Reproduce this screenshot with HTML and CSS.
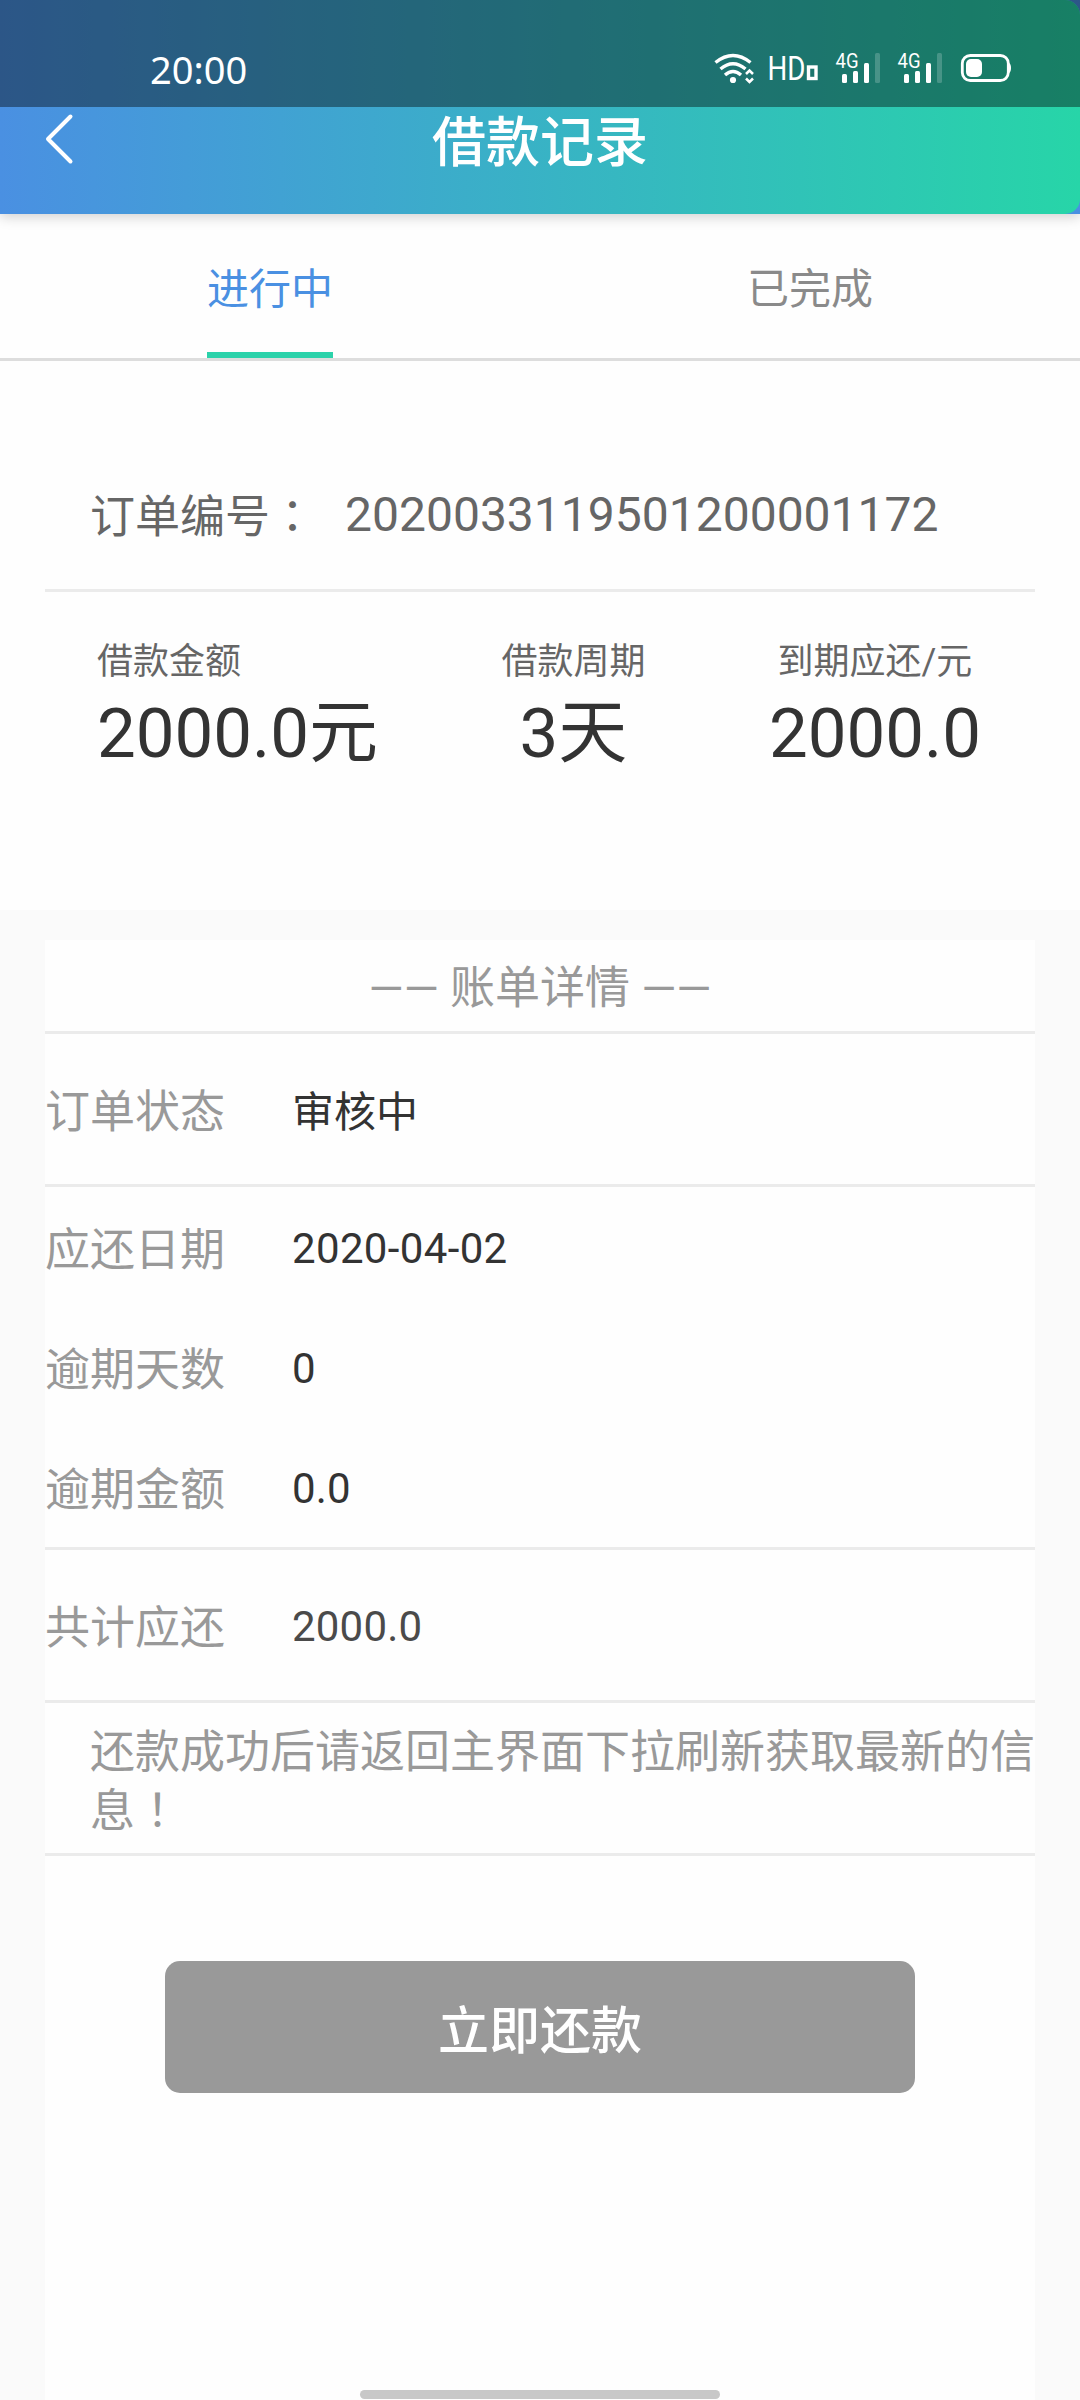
FILE: index.html
```html
<!DOCTYPE html>
<html lang="zh-CN">
<head>
  <meta charset="UTF-8" />
  <meta name="viewport" content="width=device-width, initial-scale=1.0"/>
  <title>借款记录</title>
  <link rel="stylesheet" href="styles.css">
</head>
<body>
  <header class="header">
    <div class="header-bg">
      <div class="status-bar">
        <span class="time">20:00</span>
        <svg class="status-icons" width="300" height="50" viewBox="712 44 300 50">
          <!-- wifi -->
          <g fill="none" stroke="#fff" stroke-width="3.4">
            <path d="M715.500 62.500 Q733 48.500 750.500 62.500"/>
            <path d="M720.500 69 Q733 58.500 745.500 69"/>
            <path d="M725 75 Q733 68 741 75"/>
          </g>
          <circle cx="733" cy="80" r="3.1" fill="#fff"/>
          <path d="M746 74 L749.500 70.500 L753 74 M746 78.500 L749.500 82 L753 78.500" fill="none" stroke="#fff" stroke-width="2.500"/>
          <!-- HD -->
          <text class="hd" x="767.500" y="80" textLength="38" lengthAdjust="spacingAndGlyphs">HD</text>
          <rect x="808.500" y="67" width="7.500" height="11.500" fill="none" stroke="#fff" stroke-width="3.400"/>
          <!-- 信号 -->
          <g fill="#fff">
            <text class="net" x="835.500" y="68" textLength="23" lengthAdjust="spacingAndGlyphs">4G</text>
            <rect x="842" y="74" width="5" height="9" rx="1.500"/>
            <rect x="853" y="71" width="5" height="12" rx="1.500"/>
            <rect x="864" y="63" width="5" height="20" rx="1.500"/>
            <rect x="875" y="53" width="5" height="30" rx="1.500" opacity=".2"/>
            <text class="net" x="897.500" y="68" textLength="23" lengthAdjust="spacingAndGlyphs">4G</text>
            <rect x="904" y="74" width="5" height="9" rx="1.500"/>
            <rect x="915" y="71" width="5" height="12" rx="1.500"/>
            <rect x="926" y="63" width="5" height="20" rx="1.500"/>
            <rect x="937" y="53" width="5" height="30" rx="1.500" opacity=".2"/>
          </g>
          <!-- 电池 -->
          <rect x="962.300" y="55.500" width="46" height="25" rx="8" fill="none" stroke="#fff" stroke-width="2.800"/>
          <rect x="966" y="59" width="16" height="18" rx="5" fill="#fff"/>
          <path d="M1008 63 h1 q2 1 2 5 t-2 5 h-1z" fill="#fff"/>
        </svg>
      </div>
      <div class="nav">
        <svg class="back" width="32" height="52" viewBox="0 0 32 52">
          <path d="M27.500 3.500 L5 26 L27.500 48.500" fill="none" stroke="#fff" stroke-width="4" stroke-linecap="round" stroke-linejoin="round"/>
        </svg>
        <h1 class="title">借款记录</h1>
      </div>
    </div>
  </header>

  <nav class="tabs">
    <div class="tab"><span class="tab-text active">进行中</span></div>
    <div class="tab"><span class="tab-text">已完成</span></div>
  </nav>

  <section class="summary">
    <div class="order">
      <span class="order-label">订单编号<span class="mark" lang="zh-TW">：</span></span>
      <span class="order-no">2020033119501200001172</span>
    </div>
    <div class="amounts">
      <div class="amount left">
        <span class="amount-label">借款金额</span>
        <span class="amount-value">2000.0元</span>
      </div>
      <div class="amount">
        <span class="amount-label">借款周期</span>
        <span class="amount-value">3天</span>
      </div>
      <div class="amount">
        <span class="amount-label">到期应还/元</span>
        <span class="amount-value">2000.0</span>
      </div>
    </div>
  </section>

  <main class="bill">
    <h2 class="bill-title">—— 账单详情 ——</h2>
    <div class="group">
      <div class="row tall"><span class="label">订单状态</span><span class="value cn">审核中</span></div>
    </div>
    <div class="group">
      <div class="row"><span class="label">应还日期</span><span class="value date">2020-04-02</span></div>
      <div class="row"><span class="label">逾期天数</span><span class="value">0</span></div>
      <div class="row"><span class="label">逾期金额</span><span class="value">0.0</span></div>
    </div>
    <div class="group">
      <div class="row tall"><span class="label">共计应还</span><span class="value total">2000.0</span></div>
    </div>
    <p class="note">还款成功后请返回主界面下拉刷新获取最新的信息<span class="mark" lang="zh-TW">！</span></p>
    <button class="pay">立即还款</button>
  </main>

  <div class="home-bar"></div>
</body>
</html>
```

FILE: styles.css
```css
* {
  box-sizing: border-box;
}
body {
  margin: 0;
  width: 1080px;
  height: 2400px;
  overflow: hidden;
  display: flex;
  flex-direction: column;
  background: #fafafa;
  color: #333;
  font-family: Roboto, "Noto Sans CJK SC", sans-serif;
}
h1, h2, p {
  margin: 0;
  font-weight: normal;
}
.mark {
  font-family: Roboto, "Noto Sans CJK TC", sans-serif;
}

/* 顶部 */
.header {
  position: relative;
  height: 214px;
  background: linear-gradient(rgba(0, 0, 0, .4) 107px, transparent 107px), #4a90e2;
  box-shadow: 0 3px 12px rgba(0, 0, 0, .18);
}
.header-bg {
  height: 214px;
  border-radius: 0 15px 15px 0;
  overflow: hidden;
  background: linear-gradient(to right, #4a90e2, #27d5a8);
}
.status-bar {
  display: flex;
  justify-content: space-between;
  height: 107px;
  padding: 44px 68px 0 150px;
  background: rgba(0, 0, 0, .4);
}
.time {
  color: #fff;
  font: 38px/51px "Noto Sans", sans-serif;
}
.hd {
  fill: #fff;
  font: 33px Roboto, sans-serif;
}
.net {
  font: 21px Roboto, sans-serif;
}
.nav {
  display: grid;
  grid-template-columns: 1fr auto 1fr;
  align-items: start;
}
.back {
  margin: 6px 0 0 43px;
}
.title {
  color: #fff;
  font-size: 54px;
  line-height: 74px;
  font-weight: 500;
}

/* 标签页 */
.tabs {
  display: flex;
  height: 147px;
  background: #fefefe;
  border-bottom: 3px solid #ddd;
}
.tab {
  flex: 1;
  display: flex;
  justify-content: center;
}
.tab-text {
  height: 144px;
  line-height: 151px;
  font-size: 42px;
  color: #8a8a8a;
}
.tab-text.active {
  color: #4a90e2;
  border-bottom: 6px solid #2bd2aa;
}

/* 借款概要 */
.summary {
  height: 549px;
  padding: 78px 45px 0;
  background: #fefefe;
}
.order {
  display: flex;
  align-items: center;
  height: 153px;
  padding-left: 45px;
  color: #666;
  border-bottom: 3px solid #ebebeb;
}
.order-label {
  width: 255px;
  padding-bottom: 2px;
  font-size: 45px;
}
.order-no {
  padding-top: 1px;
  font-size: 48px;
}
.amounts {
  display: flex;
  justify-content: space-between;
  padding: 43px 54px 0 52px;
}
.amount {
  display: flex;
  flex-direction: column;
  align-items: center;
}
.amount.left {
  align-items: flex-start;
}
.amount-label {
  font-size: 36px;
  line-height: 54px;
  color: #666;
}
.amount-value {
  font-size: 69px;
  line-height: 89px;
}

/* 账单详情 */
.bill {
  flex: 1;
  margin: 30px 45px 0;
  background: #fefefe;
}
.bill-title {
  height: 94px;
  border-bottom: 3px solid #ebebeb;
  color: #999;
  font-size: 45px;
  line-height: 97px;
  text-align: center;
}
.group {
  border-bottom: 3px solid #ebebeb;
}
.row {
  display: flex;
  align-items: center;
  height: 120px;
}
.row.tall {
  height: 150px;
}
.label {
  width: 247px;
  padding-bottom: 2px;
  font-size: 45px;
  color: #999;
}
.value {
  padding-top: 2px;
  font-size: 42px;
  letter-spacing: .2px;
}
.value.cn {
  padding: 0 0 2px;
  letter-spacing: 0;
}
.date {
  letter-spacing: .35px;
}
.total {
  color: #4a4a4a;
}
.note {
  height: 153px;
  padding: 20px 0 0 45px;
  border-bottom: 3px solid #ebebeb;
  color: #999;
  font-size: 45px;
  line-height: 59px;
}
.pay {
  display: block;
  width: 750px;
  height: 132px;
  margin: 105px auto 0;
  padding: 0;
  border: none;
  border-radius: 15px;
  background: #999;
  color: #fff;
  font-family: inherit;
  font-size: 51px;
  font-weight: 500;
}
.home-bar {
  position: absolute;
  left: 360px;
  top: 2390px;
  width: 360px;
  height: 9px;
  border-radius: 5px;
  background: #c8c8c8;
}
```
